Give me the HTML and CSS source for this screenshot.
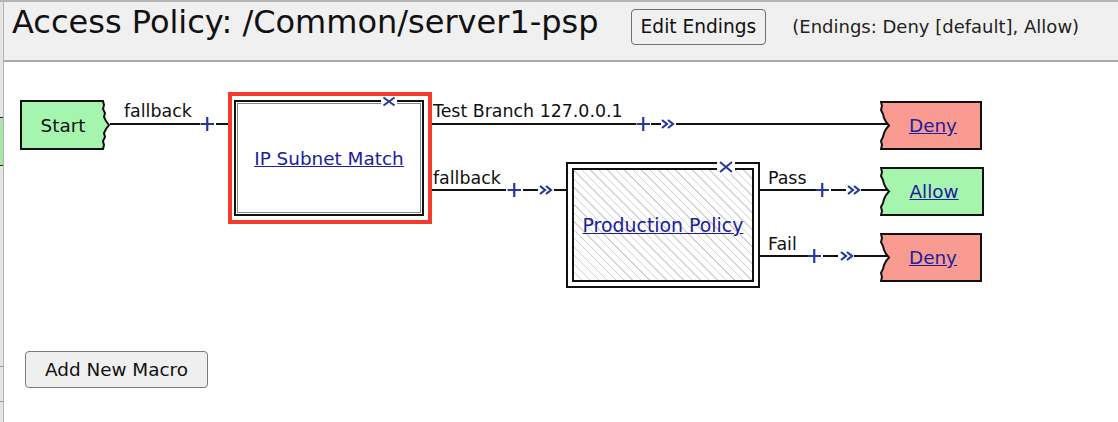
FILE: index.html
```html
<!DOCTYPE html>
<html>
<head>
<meta charset="utf-8">
<link rel="stylesheet" href="styles.css">
</head>
<body>
<div class="page">
  <div class="strip">
    <div class="strip-gap1"></div>
    <div class="strip-green"></div>
    <div class="strip-gap2"></div>
    <div class="strip-line"></div>
    <div class="strip-gap3"></div>
    <div class="strip-line"></div>
  </div>
  <div class="dialog">
    <div class="header">
      <h1 class="title">Access Policy: /Common/server1-psp</h1>
      <button class="btn btn-edit">Edit Endings</button>
      <span class="endings">(Endings: Deny [default], Allow)</span>
    </div>
    <div class="canvas">
      <svg class="wires" width="1114" height="289" viewBox="4 62 1114 289">
        <g fill="#111">
          <rect x="110" y="123" width="90" height="2"/>
          <rect x="216" y="123" width="12" height="2"/>
          <rect x="424" y="123" width="212" height="2"/>
          <rect x="651" y="123" width="10" height="2"/>
          <rect x="676" y="123" width="212" height="2"/>
          <rect x="424" y="189" width="82" height="2"/>
          <rect x="523" y="189" width="15" height="2"/>
          <rect x="554" y="189" width="12" height="2"/>
          <rect x="760" y="189" width="56" height="2"/>
          <rect x="831" y="189" width="15" height="2"/>
          <rect x="861" y="189" width="27" height="2"/>
          <rect x="760" y="255" width="48" height="2"/>
          <rect x="823" y="255" width="15" height="2"/>
          <rect x="854" y="255" width="34" height="2"/>
        </g>
        <g class="lbl">
          <text x="124" y="117">fallback</text>
          <text x="433" y="117">Test Branch 127.0.0.1</text>
          <text x="433" y="184">fallback</text>
          <text x="768" y="184">Pass</text>
          <text x="768" y="250">Fail</text>
        </g>
        <g stroke="#26379a" stroke-width="2.2" fill="none">
          <path d="M200.5 124H214M207.25 117V131"/>
          <path d="M636.5 124H650M643.25 117V131"/>
          <path d="M507.5 190H521M514.25 183V197"/>
          <path d="M815.5 190H829M822.25 183V197"/>
          <path d="M807.5 256H821M814.25 249V263"/>
          <path d="M662 120L667 124L662 128M668 120L673 124L668 128"/>
          <path d="M540 186L545 190L540 194M546 186L551 190L546 194"/>
          <path d="M848 186L853 190L848 194M854 186L859 190L854 194"/>
          <path d="M841 252L846 256L841 260M847 252L852 256L847 260"/>
        </g>
      </svg>

      <div class="node start">
        <svg class="shape" width="90" height="50" viewBox="0 0 90 50"><polygon points="1,1 83,1 84,5 83,9 85,13 84,17 86,21 89,25 86,29 84,33 85,37 83,41 84,45 83,49 1,49" fill="#a6f5ae" stroke="#111" stroke-width="2"/></svg>
        <span class="node-label">Start</span>
      </div>

      <div class="sel">
        <div class="box">
          <a class="link" href="#">IP Subnet Match</a>
        </div>
        <span class="close close-ip"><svg width="16" height="11" viewBox="0 0 16 11"><path d="M2.5 1.5L13.5 9.5M13.5 1.5L2.5 9.5" stroke="#26379a" stroke-width="2"/></svg></span>
      </div>

      <div class="pp">
        <div class="pp-inner">
          <a class="link" href="#">Production Policy</a>
        </div>
        <span class="close close-pp"><svg width="18" height="14" viewBox="0 0 18 14"><path d="M3 2L15 12M15 2L3 12" stroke="#26379a" stroke-width="2"/></svg></span>
      </div>

      <div class="node end deny1">
        <svg class="shape" width="102" height="49" viewBox="0 0 102 49"><polygon points="1,1 101,1 101,48 1,48 2,44 1,40 3,36 4,32 6,28 9,24.5 6,21 4,17 3,13 1,9 2,5" fill="#fa9b91" stroke="#111" stroke-width="2"/></svg>
        <a class="link node-link" href="#">Deny</a>
      </div>
      <div class="node end allow">
        <svg class="shape" width="104" height="49" viewBox="0 0 104 49"><polygon points="1,1 103,1 103,48 1,48 2,44 1,40 3,36 4,32 6,28 9,24.5 6,21 4,17 3,13 1,9 2,5" fill="#a6f5ae" stroke="#111" stroke-width="2"/></svg>
        <a class="link node-link" href="#">Allow</a>
      </div>
      <div class="node end deny2">
        <svg class="shape" width="102" height="49" viewBox="0 0 102 49"><polygon points="1,1 101,1 101,48 1,48 2,44 1,40 3,36 4,32 6,28 9,24.5 6,21 4,17 3,13 1,9 2,5" fill="#fa9b91" stroke="#111" stroke-width="2"/></svg>
        <a class="link node-link" href="#">Deny</a>
      </div>
    </div>
    <div class="actions">
      <button class="btn btn-add">Add New Macro</button>
    </div>
  </div>
</div>
</body>
</html>
```

FILE: styles.css
```css
html, body {
  margin: 0;
  padding: 0;
  background: #fff;
}
body {
  font-family: "DejaVu Sans", "Verdana", sans-serif;
  color: #111;
  overflow: hidden;
}
.page {
  display: flex;
  height: 420px;
  border-top: 2px solid #b4b4b4;
}
.strip {
  width: 3px;
  flex: none;
  background: #e4e4e4;
  border-right: 1px solid #b3b3b3;
  display: flex;
  flex-direction: column;
}
.strip-gap1 { height: 115px; }
.strip-green {
  height: 47px;
  background: #a6e6aa;
  border-top: 1px solid #222;
  border-bottom: 1px solid #222;
}
.strip-gap2 { height: 200px; }
.strip-line { height: 1px; background: #9a9a9a; }
.strip-gap3 { height: 34px; }

.dialog {
  flex: 1;
  display: flex;
  flex-direction: column;
}
.header {
  height: 60px;
  flex: none;
  box-sizing: border-box;
  background: #f0f0f0;
  border-bottom: 2px solid #a9a9a9;
  display: flex;
  align-items: baseline;
  padding: 2px 0 0 8px;
}
.title {
  margin: 0;
  font-size: 32px;
  font-weight: normal;
  line-height: 36px;
  color: #111;
  white-space: nowrap;
}
.btn {
  font-family: "DejaVu Sans", "Verdana", sans-serif;
  color: #111;
  background: #f0f0f0;
  border: 1px solid #6f6f6f;
  border-radius: 4px;
  padding: 0;
  box-sizing: border-box;
}
.btn-edit {
  margin-left: 32px;
  font-size: 18.6px;
  height: 36px;
  padding: 0 9px;
}
.endings {
  margin-left: 26px;
  font-size: 18px;
  color: #222;
  white-space: nowrap;
}

.canvas {
  position: relative;
  height: 289px;
  flex: none;
}
.wires {
  position: absolute;
  left: 0;
  top: 0;
}
.lbl text {
  font-family: "DejaVu Sans", "Verdana", sans-serif;
  font-size: 17.4px;
  fill: #111;
}
.node {
  position: absolute;
  display: flex;
  align-items: center;
  justify-content: center;
}
.shape {
  position: absolute;
  left: 0;
  top: 0;
}
.node-label, .node-link {
  position: relative;
  font-size: 18.4px;
}
.start { left: 16px; top: 38px; width: 86px; height: 50px; }
.end { padding-left: 4px; box-sizing: border-box; }
.deny1 { left: 876px; top: 39px; width: 102px; height: 49px; }
.allow { left: 876px; top: 105px; width: 104px; height: 49px; }
.deny2 { left: 876px; top: 171px; width: 102px; height: 49px; }

.link {
  color: #20209a;
  text-decoration: underline;
  font-size: 18.4px;
  white-space: nowrap;
}

.sel {
  position: absolute;
  left: 224px;
  top: 30px;
  width: 204px;
  height: 132px;
  box-sizing: border-box;
  border: 4px solid #f33c2c;
  padding: 4px 4px 4px 2px;
  background: #fff;
}
.box {
  height: 100%;
  box-sizing: border-box;
  border: 2px solid #111;
  box-shadow: inset 0 0 0 1px #fff, inset 0 0 0 2px #888;
  display: flex;
  align-items: center;
  justify-content: center;
}
.pp {
  position: absolute;
  left: 562px;
  top: 100px;
  width: 194px;
  height: 126px;
  box-sizing: border-box;
  border: 2px solid #111;
  padding: 4px;
  background: #fff;
}
.pp-inner {
  height: 100%;
  box-sizing: border-box;
  border: 2px solid #111;
  background: repeating-linear-gradient(45deg, #fff 0 5px, #d2d2d2 5px 6px);
  display: flex;
  align-items: center;
  justify-content: center;
}
.pp .link { font-size: 18.9px; }
.close {
  position: absolute;
  background: #fff;
  line-height: 0;
}
.close-ip { left: 149px; top: 0; }
.close-pp { left: 149px; top: -4px; }

.actions {
  padding-left: 21px;
}
.btn-add {
  width: 183px;
  height: 37px;
  font-size: 18.4px;
  background: #efefef;
  border-color: #7a7a7a;
}
```
